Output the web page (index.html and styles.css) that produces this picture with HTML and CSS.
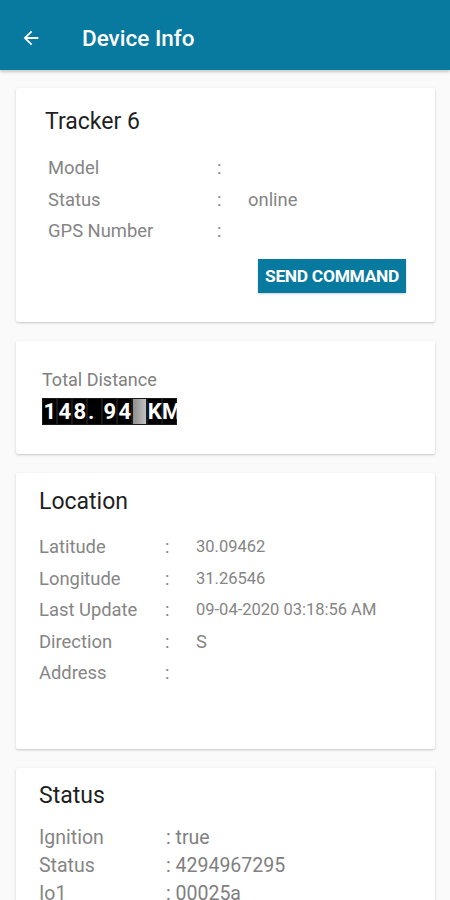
FILE: index.html
```html
<!DOCTYPE html>
<html>
<head>
<meta charset="utf-8">
<link rel="stylesheet" href="styles.css">
</head>
<body>
<header class="appbar">
  <svg class="back" width="22" height="22" viewBox="0 0 24 24"><path d="M20 11H7.83l5.59-5.59L12 4l-8 8 8 8 1.41-1.41L7.83 13H20v-2z" fill="#fff"/></svg>
  <h1 class="title">Device Info</h1>
</header>
<main class="content">
  <section class="card card-device">
    <h2 class="card-title">Tracker 6</h2>
    <div class="rows rows-device">
      <div class="row"><span class="lbl">Model</span><span class="colon">:</span><span class="val"></span></div>
      <div class="row"><span class="lbl">Status</span><span class="colon">:</span><span class="val">online</span></div>
      <div class="row"><span class="lbl">GPS Number</span><span class="colon">:</span><span class="val"></span></div>
    </div>
    <div class="actions"><button class="btn">SEND COMMAND</button></div>
  </section>

  <section class="card card-distance">
    <div class="dist-label">Total Distance</div>
    <div class="odo">
      <span class="cell">1</span><span class="cell">4</span><span class="cell">8</span><span class="cell dot">.</span><span class="cell">9</span><span class="cell">4</span><span class="cell gap"></span><span class="cell">K</span><span class="cell">M</span>
    </div>
  </section>

  <section class="card card-location">
    <h2 class="card-title">Location</h2>
    <div class="rows rows-loc">
      <div class="row"><span class="lbl">Latitude</span><span class="colon">:</span><span class="val">30.09462</span></div>
      <div class="row"><span class="lbl">Longitude</span><span class="colon">:</span><span class="val">31.26546</span></div>
      <div class="row"><span class="lbl">Last Update</span><span class="colon">:</span><span class="val">09-04-2020 03:18:56 AM</span></div>
      <div class="row"><span class="lbl">Direction</span><span class="colon">:</span><span class="val big">S</span></div>
      <div class="row"><span class="lbl">Address</span><span class="colon">:</span><span class="val"></span></div>
    </div>
  </section>

  <section class="card card-status">
    <h2 class="card-title">Status</h2>
    <div class="rows rows-status">
      <div class="row"><span class="lbl">Ignition</span><span class="val">: true</span></div>
      <div class="row"><span class="lbl">Status</span><span class="val">: 4294967295</span></div>
      <div class="row"><span class="lbl">Io1</span><span class="val">: 00025a</span></div>
    </div>
  </section>
</main>
</body>
</html>
```

FILE: styles.css
```css
* { box-sizing: border-box; }
html, body { margin: 0; padding: 0; }
body {
  width: 450px;
  height: 900px;
  overflow: hidden;
  background: #fafafa;
  font-family: Roboto, "Liberation Sans", sans-serif;
}
.appbar {
  height: 70px;
  background: #08799f;
  display: flex;
  align-items: center;
  padding: 6px 0 0 20px;
  box-shadow: 0 2px 3px rgba(0,0,0,0.2);
}
.back { display: block; }
.title {
  margin: 0 0 0 40px;
  color: #fff;
  font-size: 22.5px;
  line-height: 26px;
  font-weight: 500;
}
.content {
  padding: 18px 15px 0 16px;
  display: flex;
  flex-direction: column;
  gap: 19px;
}
.card {
  background: #fff;
  box-shadow: 0 1px 3px rgba(0,0,0,0.16), 0 1px 1px rgba(0,0,0,0.06);
  border-radius: 2px;
}
.card-title {
  margin: 0;
  font-size: 23px;
  font-weight: 400;
  color: #1f1f1f;
  line-height: 26px;
}
.row {
  display: flex;
  align-items: center;
  color: #858585;
  font-size: 18.4px;
}
.lbl { flex: none; }
.colon { flex: none; }
.val { color: #858585; }

.card-device { height: 234px; padding: 21px 29px 0 29px; }
.rows-device { margin-top: 17px; padding-left: 3px; }
.rows-device .row { height: 31.5px; }
.rows-device .lbl { width: 169px; }
.rows-device .colon { width: 31px; }
.actions { display: flex; justify-content: flex-end; margin-top: 12px; }
.btn {
  background: #08799f;
  color: #fff;
  border: none;
  font-family: Roboto, "Liberation Sans", sans-serif;
  font-weight: 700;
  font-size: 17.4px;
  height: 34px;
  width: 148px;
  padding: 0;
  letter-spacing: -0.3px;
  border-radius: 0;
  box-shadow: 0 1px 2px rgba(0,0,0,0.2);
}

.card-distance { height: 113px; padding: 29px 26px 0 26px; }
.dist-label { color: #808080; font-size: 18px; line-height: 20px; }
.odo { display: flex; margin-top: 8px; height: 27px; }
.cell {
  width: 15px;
  height: 27px;
  background: #000;
  color: #fff;
  font-weight: 700;
  font-size: 22px;
  line-height: 27px;
  text-align: center;
  font-family: Roboto, "Liberation Sans", sans-serif;
  letter-spacing: -0.5px;
  box-shadow: inset 0 0 0 1px #1a1a1a;
}
.cell.dot { text-align: left; padding-left: 1px; }
.cell.gap { background: linear-gradient(90deg, #8a8a8a, #c4c4c4); }

.card-location { height: 276px; padding: 16px 23px 0 23px; }
.rows-loc { margin-top: 16px; }
.rows-loc .row { height: 31.5px; }
.rows-loc .lbl { width: 126px; }
.rows-loc .colon { width: 31px; }
.rows-loc .val { font-size: 16.5px; }
.rows-loc .val.big { font-size: 18.4px; }

.card-status { height: 200px; padding: 15px 23px 0 23px; }
.rows-status { margin-top: 14px; }
.rows-status .row { height: 28px; font-size: 19.5px; }
.rows-status .lbl { width: 127px; }
.rows-status .val { color: #808080; }
```
